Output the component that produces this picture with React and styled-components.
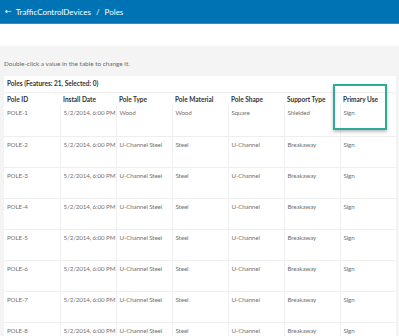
import styled, { createGlobalStyle } from "styled-components"

const GlobalStyle = createGlobalStyle`
    html, body {
        margin: 0;
        padding: 0;
        background: #f4f4f4;
        font-family: 'Lato', 'Open Sans', sans-serif;
        overflow: hidden;
    }
`

const columns = ["Pole ID", "Install Date", "Pole Type", "Pole Material", "Pole Shape", "Support Type", "Primary Use"]

const rows = [
    ["POLE-1", "5/2/2014, 6:00 PM", "Wood", "Wood", "Square", "Shielded", "Sign"],
    ...[2, 3, 4, 5, 6, 7, 8].map((n) => [
        `POLE-${n}`, "5/2/2014, 6:00 PM", "U-Channel Steel", "Steel", "U-Channel", "Breakaway", "Sign",
    ]),
]

export default function App() {
    return (
        <>
            <GlobalStyle />
            <Page>
                <Header>
                    <BackArrow>←</BackArrow>
                    <Crumb>TrafficControlDevices</Crumb>
                    <Separator>/</Separator>
                    <Crumb>Poles</Crumb>
                </Header>
                <Spacer />
                <Content>
                    <Hint>Double-click a value in the table to change it.</Hint>
                    <Panel>
                        <PanelTitle>Poles (Features: 21, Selected: 0)</PanelTitle>
                        <Table>
                            <thead>
                                <tr>
                                    {columns.map((col) => (
                                        <HeaderCell key={col}>{col}</HeaderCell>
                                    ))}
                                </tr>
                            </thead>
                            <tbody>
                                {rows.map((row) => (
                                    <Row key={row[0]}>
                                        {row.map((value, index) => (
                                            <Cell key={index}>{value}</Cell>
                                        ))}
                                    </Row>
                                ))}
                            </tbody>
                        </Table>
                        <Highlight />
                    </Panel>
                </Content>
            </Page>
        </>
    )
}

const Page = styled.div`
    width: 399px;
    height: 336px;
    display: flex;
    flex-direction: column;
    overflow: hidden;
`

const Header = styled.div`
    height: 23px;
    flex-shrink: 0;
    background: #0073b5;
    border-bottom: 1px solid #2a8fcc;
    display: flex;
    align-items: center;
    gap: 3px;
    padding-left: 5px;
    color: #ffffff;
    font-size: 8px;
`

const BackArrow = styled.span`
    font-family: 'DejaVu Sans', sans-serif;
    font-size: 8px;
    margin-right: 1px;
`

const Crumb = styled.span``

const Separator = styled.span`
    margin: 0 2px;
`

const Spacer = styled.div`
    height: 22px;
    flex-shrink: 0;
    background: #ffffff;
`

const Content = styled.div`
    flex: 1;
    padding: 12px 3px 0 4px;
    display: flex;
    flex-direction: column;
`

const Hint = styled.div`
    font-size: 6.4px;
    color: #6a6a6a;
    height: 18px;
    line-height: 12px;
`

const Panel = styled.div`
    position: relative;
    background: #ffffff;
    flex: 1;
`

const PanelTitle = styled.div`
    height: 16px;
    line-height: 16px;
    padding-left: 3px;
    font-size: 6.5px;
    font-weight: 700;
    color: #323232;
    border-bottom: 1px solid #eeeeee;
`

const Table = styled.table`
    width: 100%;
    table-layout: fixed;
    border-collapse: collapse;
`

const HeaderCell = styled.th`
    height: 12px;
    padding: 0 3px;
    text-align: left;
    font-size: 6.5px;
    font-weight: 700;
    color: #323232;
    white-space: nowrap;
`

const Row = styled.tr`
    height: 31px;
    border-bottom: 1px solid #eeeeee;
`

const Cell = styled.td`
    vertical-align: top;
    padding: 4px 2px 0 3px;
    font-size: 6.2px;
    letter-spacing: -0.1px;
    color: #707070;
    white-space: nowrap;
    border-left: 1px solid #f0f0f0;

    &:first-child {
        border-left: none;
    }
`

const Highlight = styled.div`
    position: absolute;
    left: 329px;
    top: 8px;
    width: 50px;
    height: 42px;
    border: 2px solid #2bab98;
    box-shadow: 0 2px 3px rgba(0, 0, 0, 0.25);
    pointer-events: none;
`
